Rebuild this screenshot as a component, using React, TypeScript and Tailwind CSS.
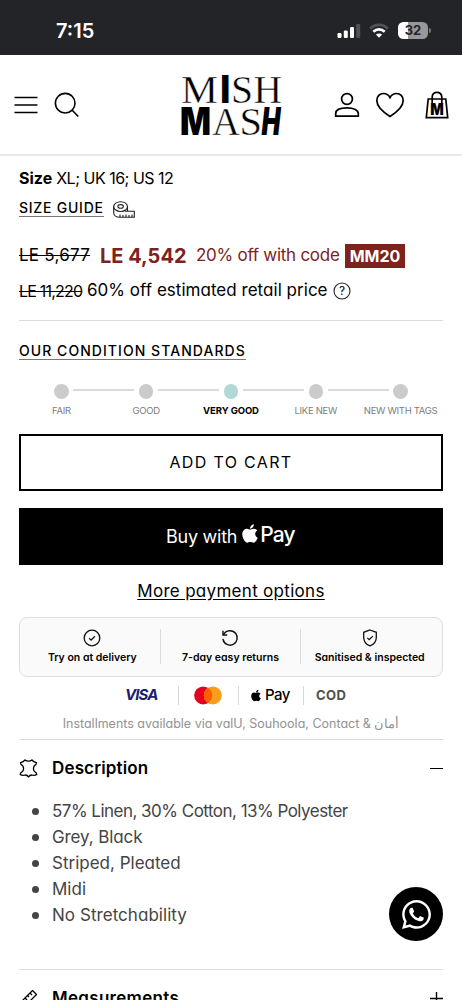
import React from "react";
import { FaApple, FaWhatsapp } from "react-icons/fa";

const conditions = ["FAIR", "GOOD", "VERY GOOD", "LIKE NEW", "NEW WITH TAGS"];
const activeCondition = 2;

const details = [
  { text: "57% Linen, 30% Cotton, 13% Polyester", className: "tracking-[-0.52px]" },
  { text: "Grey, Black", className: "tracking-[-0.1px]" },
  { text: "Striped, Pleated", className: "" },
  { text: "Midi", className: "" },
  { text: "No Stretchability", className: "tracking-[0.05px]" },
];

function StatusBar() {
  return (
    <div className="h-[55px] bg-[#232428] flex items-center justify-between pl-14 pr-[31px] pt-[6px] text-white">
      <span className="text-[20px] font-semibold">7:15</span>
      <div className="flex items-center">
        <svg width="24" height="16" viewBox="0 0 24 16" fill="white">
          <rect x="0.5" y="10" width="4" height="5" rx="1.2" />
          <rect x="6.8" y="7.5" width="4" height="7.5" rx="1.2" />
          <rect x="13" y="4" width="4" height="11" rx="1.2" />
          <rect x="19.2" y="1" width="4" height="14" rx="1.2" fill="#505156" />
        </svg>
        <svg className="ml-2" width="20" height="16" viewBox="0 0 20 16" fill="none" strokeWidth="2.6">
          <path d="M1.2 5.6C6 0.6 14 0.6 18.8 5.6" stroke="#505156" />
          <path d="M4.3 8.8C7.6 5.6 12.4 5.6 15.7 8.8" stroke="white" />
          <path d="M10 14.8L6.9 11.6C8.6 10 11.4 10 13.1 11.6Z" fill="white" />
        </svg>
        <div className="ml-[9px] w-[30px] h-[17px] rounded-[5.5px] overflow-hidden bg-[linear-gradient(90deg,#fff_33%,#97989b_33%)] flex items-center justify-center text-[13px] font-bold text-[#232428]">
          32
        </div>
        <div className="ml-px w-[2px] h-[5px] rounded-r-full bg-[#77787c]" />
      </div>
    </div>
  );
}

function Logo() {
  return (
    <svg width="102" height="84" viewBox="0 -10 102 84" fill="black" className="overflow-visible">
      <g fontFamily="Liberation Serif" fontSize="41" stroke="white" strokeWidth="0.45">
        <text x="0" y="30" textLength="37" lengthAdjust="spacingAndGlyphs">M</text>
        <text x="50" y="30" textLength="22" lengthAdjust="spacingAndGlyphs">S</text>
        <text x="72.5" y="30" textLength="28.5" lengthAdjust="spacingAndGlyphs">H</text>
        <text x="31" y="62" textLength="28" lengthAdjust="spacingAndGlyphs">A</text>
        <text x="58.5" y="62" textLength="22.5" lengthAdjust="spacingAndGlyphs">S</text>
      </g>
      <g fontFamily="Inter" fontWeight="900" fontSize="38">
        <text x="39.5" y="30" textLength="9.5" lengthAdjust="spacingAndGlyphs">I</text>
        <text x="-1" y="62" textLength="31" lengthAdjust="spacingAndGlyphs">M</text>
        <text x="80.5" y="62" textLength="19" lengthAdjust="spacingAndGlyphs" fontStyle="italic">H</text>
      </g>
    </svg>
  );
}

function Header() {
  return (
    <header className="h-[101px] border-b-2 border-[#e9e9e9] flex items-center justify-between pl-[14px] pr-[13px]">
      <div className="flex items-center w-[167px]">
        <svg width="24" height="18" viewBox="0 0 24 18" stroke="black" strokeWidth="1.6">
          <path d="M0.5 1.5H23.5M0.5 9H23.5M0.5 16.5H23.5" />
        </svg>
        <svg className="ml-4 mt-px" width="26" height="26" viewBox="0 0 26 26" fill="none" stroke="black" strokeWidth="1.6">
          <circle cx="11.2" cy="11.2" r="9.8" />
          <path d="M18 18L24.3 24.5" />
        </svg>
      </div>
      <Logo />
      <div className="flex items-center justify-end w-[167px]">
        <svg width="26" height="26" viewBox="0 0 26 26" fill="none" stroke="black" strokeWidth="1.7">
          <circle cx="13" cy="7" r="5.4" />
          <path d="M1.7 24.2V21.5C1.7 18 6 15.9 13 15.9S24.3 18 24.3 21.5V24.2Z" />
        </svg>
        <svg className="ml-[15px]" width="30" height="26" viewBox="0 0 30 26" fill="none" stroke="black" strokeWidth="1.7">
          <path d="M15 24.5C8 20 1.8 14.5 1.8 8.5C1.8 4.4 4.8 1.5 8.4 1.5C11.2 1.5 13.7 3 15 5.6C16.3 3 18.8 1.5 21.6 1.5C25.2 1.5 28.2 4.4 28.2 8.5C28.2 14.5 22 20 15 24.5Z" />
        </svg>
        <svg className="ml-5" width="24" height="28" viewBox="0 0 24 28" fill="none" stroke="black" strokeWidth="1.7">
          <path d="M3.2 8H20.8L22.7 26.6H1.3Z" />
          <path d="M7.2 12V6C7.2 -0.2 16.8 -0.2 16.8 6V12" />
          <text x="5.3" y="23.8" fontFamily="Inter" fontWeight="900" fontSize="15.5" fill="black" stroke="none" textLength="13.5" lengthAdjust="spacingAndGlyphs">M</text>
        </svg>
      </div>
    </header>
  );
}

function TapeIcon() {
  return (
    <svg width="22" height="17" viewBox="0 0 22 17" fill="none" stroke="#222" strokeWidth="1.1">
      <ellipse cx="7.6" cy="5.6" rx="6.9" ry="4.9" />
      <ellipse cx="7.6" cy="5.4" rx="2.7" ry="1.8" />
      <path d="M0.7 5.6V12C0.7 14.5 3.5 16.2 7 16.2H21.3V10.2H11.5M14.5 5.6V10.2M7 16V13.5M10 16V14M13 16V13.5M16 16V14M19 16V13.5" />
    </svg>
  );
}

function ConditionScale() {
  return (
    <div className="grid grid-cols-5">
      {conditions.map((label, i) => (
        <div key={label} className="relative flex flex-col items-center">
          <div
            className={
              i === activeCondition
                ? "size-[14.5px] rounded-full bg-[#b0d8d6]"
                : "size-[14.5px] rounded-full bg-[#cbcbcb]"
            }
          />
          {i < conditions.length - 1 && (
            <div className="absolute top-[5px] left-[calc(50%+12px)] w-[61px] h-[2px] bg-[#dadada]" />
          )}
          <span
            className={
              i === activeCondition
                ? "mt-1 h-4 leading-4 text-[9.5px] font-bold text-black whitespace-nowrap tracking-[-0.1px]"
                : "mt-1 h-4 leading-4 text-[9.5px] text-[#7d7d7d] whitespace-nowrap tracking-[-0.3px]"
            }
          >
            {label}
          </span>
        </div>
      ))}
    </div>
  );
}

function TrustBox() {
  return (
    <div className="mt-[10px] h-[60px] rounded-lg border border-[#dedede] bg-[#fafafa] grid grid-cols-3 items-center divide-x divide-[#dcdcdc] text-[10.5px] font-semibold text-black">
      <div className="h-[35px] flex flex-col items-center gap-[5px] leading-3 pl-[5px]">
        <svg width="18" height="18" viewBox="0 0 18 18" className="shrink-0" fill="none" stroke="#111" strokeWidth="1.3">
          <circle cx="9" cy="9" r="7.8" />
          <path d="M6.2 9.3L8.1 11.1L11.9 7.2" />
        </svg>
        <span className="whitespace-nowrap">Try on at delivery</span>
      </div>
      <div className="h-[35px] flex flex-col items-center gap-[5px] leading-3">
        <svg width="18" height="18" viewBox="0 0 18 18" className="shrink-0" fill="none" stroke="#111" strokeWidth="1.4">
          <path d="M2 1.8V6H6.2" />
          <path d="M2.3 5.8C5 0.8 11.6 0.4 14.8 4.5C17.4 8 16.2 13 12.6 15.2C8.4 17.6 2.9 15.3 1.9 10" />
        </svg>
        <span className="whitespace-nowrap">7-day easy returns</span>
      </div>
      <div className="h-[35px] flex flex-col items-center gap-[5px] leading-3 pr-1">
        <svg width="18" height="18" viewBox="0 0 18 18" className="shrink-0" fill="none" stroke="#111" strokeWidth="1.3">
          <path d="M9 1L15.3 3.3V8.4C15.3 12.4 12.6 15.4 9 16.9C5.4 15.4 2.7 12.4 2.7 8.4V3.3Z" />
          <path d="M6.3 8.9L8.2 10.7L11.8 7.1" />
        </svg>
        <span className="whitespace-nowrap">Sanitised &amp; inspected</span>
      </div>
    </div>
  );
}

function PaymentMethods() {
  return (
    <div className="mt-2 h-[22px] flex items-center pl-[106px] [font-feature-settings:normal]">
      <span className="w-[33px] text-[15px] font-bold italic tracking-[-0.9px] text-[#1a1f6b]">VISA</span>
      <div className="ml-5 w-px h-[19px] bg-[#d8d8d8]" />
      <svg className="ml-[15px]" width="28" height="19" viewBox="0 0 28 19">
        <circle cx="9.2" cy="9.4" r="9" fill="#e6001f" />
        <circle cx="18.8" cy="9.4" r="9" fill="#f79e1b" />
        <path d="M14 1.8A9 9 0 0 1 14 17A9 9 0 0 1 14 1.8Z" fill="#ff5f00" />
      </svg>
      <div className="ml-4 w-px h-[19px] bg-[#d8d8d8]" />
      <FaApple className="ml-3 w-[10px] h-[13px] text-black" />
      <span className="ml-1 w-[28px] text-[15px] font-medium tracking-[-0.5px] text-black">Pay</span>
      <div className="ml-[10px] w-px h-[19px] bg-[#d8d8d8]" />
      <span className="ml-3 text-[13px] font-bold tracking-[0.4px] text-[#505050]">COD</span>
    </div>
  );
}

export default function App() {
  return (
    <div className="relative w-[462px] h-[1000px] overflow-hidden bg-white text-black font-['Inter',sans-serif] [font-feature-settings:'cv11'] text-[17px]">
      <StatusBar />
      <Header />
      <main className="px-[19px] pt-[7px]">
        <div className="h-[30px] flex items-center gap-1 text-[16px]">
          <span className="font-bold">Size</span>
          <span className="tracking-[-0.5px]">XL; UK 16; US 12</span>
        </div>
        <div className="h-[30px] flex items-center">
          <span className="h-[17px] leading-[16px] border-b border-[#777] text-[14px] font-medium tracking-[0.75px]">SIZE GUIDE</span>
          <span className="ml-[9px] mt-[2px]"><TapeIcon /></span>
        </div>
        <div className="mt-[18px] h-[30px] flex items-center whitespace-nowrap">
          <span className="w-[71px] line-through tracking-[0.25px]">LE 5,677</span>
          <span className="ml-[10px] w-[87px] text-[20px] font-bold text-[#7e221d]">LE 4,542</span>
          <span className="ml-[9px] w-[144px] tracking-[-0.27px] text-[#7e221d]">20% off with code</span>
          <span className="ml-[5px] w-[60px] h-[24px] flex items-center justify-center bg-[#7e221d] text-white text-[16px] font-bold">MM20</span>
        </div>
        <div className="mt-[5px] h-[30px] flex items-center whitespace-nowrap">
          <span className="w-[64px] line-through text-[16px] tracking-[-0.8px]">LE 11,220</span>
          <span className="ml-1 w-[242px] tracking-[0.03px]">60% off estimated retail price</span>
          <svg className="ml-1" width="18" height="18" viewBox="0 0 18 18" fill="none" stroke="#222" strokeWidth="1.1">
            <circle cx="9" cy="9" r="8" />
            <text x="9" y="13" textAnchor="middle" fontSize="11.5" fontWeight="500" fill="#222" stroke="none">?</text>
          </svg>
        </div>
        <div className="mt-[14px] border-t border-[#dcdcdc]" />
        <div className="mt-[22px] h-[18px] flex">
          <span className="h-[17px] leading-[16px] border-b border-[#777] text-[14px] font-medium tracking-[1.05px]">OUR CONDITION STANDARDS</span>
        </div>
        <div className="mt-[23px]">
          <ConditionScale />
        </div>
        <button className="mt-[15px] w-full h-[57px] border-2 border-black flex items-center justify-center text-[16px] tracking-[1.35px]">
          ADD TO CART
        </button>
        <button className="mt-[17px] w-full h-[57px] bg-black text-white flex items-center justify-center [font-feature-settings:normal]">
          <span className="text-[18px] w-[71px] whitespace-nowrap tracking-[-0.25px]">Buy with</span>
          <FaApple className="ml-[5px] w-[16px] h-[21px] mb-[5px]" />
          <span className="ml-px text-[21px] w-[37px] mb-[2px] font-medium tracking-[-0.8px]">Pay</span>
        </button>
        <div className="mt-[12px] h-[30px] flex items-center justify-center">
          <a className="underline underline-offset-2 tracking-[0.3px]">More payment options</a>
        </div>
        <TrustBox />
        <PaymentMethods />
        <p className="mt-[7px] h-[20px] leading-[20px] text-center text-[12.5px] text-[#929292] whitespace-nowrap">
          Installments available via valU, Souhoola, Contact &amp; أمان
        </p>
        <div className="mt-[5px] border-t border-[#dcdcdc]" />
        <div className="mt-[14px] h-[30px] flex items-center">
          <svg width="19" height="19" viewBox="0 0 19 19" fill="none" stroke="black" strokeWidth="1.3" strokeLinejoin="round">
            <path d="M9.5 2.2C8 2.2 7 1.8 6 0.9C5.2 2.2 4 3.2 1.5 3.6C1.5 5 2 6 3.6 6.6C4.8 8.6 4.8 10.8 3.6 12.4C2.2 13 1.4 14 1.2 15.4C2.6 16.4 4.4 16.6 6 16C7.4 16 8.8 16.6 9.5 18C10.2 16.6 11.6 16 13 16C14.6 16.6 16.4 16.4 17.8 15.4C17.6 14 16.8 13 15.4 12.4C14.2 10.8 14.2 8.6 15.4 6.6C17 6 17.5 5 17.5 3.6C15 3.2 13.8 2.2 13 0.9C12 1.8 11 2.2 9.5 2.2Z" />
          </svg>
          <span className="ml-[14px] font-semibold tracking-[0.15px]">Description</span>
          <div className="ml-auto w-[13px] h-[1.5px] bg-black" />
        </div>
        <ul className="mt-[15px] text-[#444]">
          {details.map((item) => (
            <li key={item.text} className="h-[26px] flex items-center whitespace-nowrap">
              <span className="ml-[13px] mr-[13px] size-[7px] rounded-full bg-[#444]" />
              <span className={item.className}>{item.text}</span>
            </li>
          ))}
        </ul>
        <div className="mt-[40px] border-t border-[#dcdcdc]" />
        <div className="mt-[14px] h-[30px] flex items-center">
          <svg width="19" height="19" viewBox="0 0 19 19" fill="none" stroke="black" strokeWidth="1.3" strokeLinejoin="round">
            <path d="M13.5 1.5L17.5 5.5L5.5 17.5L1.5 13.5ZM11 4L13 6M8.5 6.5L10 8M6 9L8 11M3.5 11.5L5 13" />
          </svg>
          <span className="ml-[14px] font-semibold tracking-[0.3px]">Measurements</span>
          <svg className="ml-auto" width="13" height="13" viewBox="0 0 13 13" stroke="black" strokeWidth="1.4">
            <path d="M0 6.5H13M6.5 0V13" />
          </svg>
        </div>
      </main>
      <a className="absolute left-[389px] top-[887px] size-[54px] rounded-full bg-black text-white flex items-center justify-center">
        <FaWhatsapp className="size-[33px]" />
      </a>
    </div>
  );
}
